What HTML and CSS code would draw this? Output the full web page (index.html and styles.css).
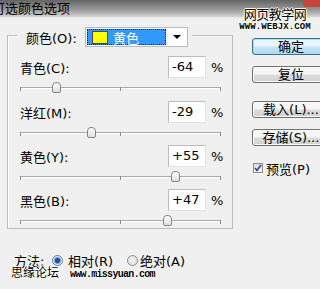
FILE: index.html
```html
<!DOCTYPE html>
<html>

<head>
    <title>可选颜色选项</title>
    <link rel="stylesheet" href="styles.css">
</head>

<body>
    <div class="titlebar">
        <span class="title">可选颜色选项</span>
        <span class="close"></span>
    </div>

    <div class="wm-top">
        <div class="wm-cn">网页教学网</div>
        <div class="wm-url">WWW.WEBJX.COM</div>
    </div>

    <div class="main">
        <div class="left">
            <div class="group">
                <div class="legend">
                    <span class="legend-label">颜色(O):</span>
                    <div class="select">
                        <div class="sel-value">
                            <span class="swatch"></span>
                            <span class="sel-text">黄色</span>
                        </div>
                        <div class="sel-arrow"><span class="tri"></span></div>
                    </div>
                </div>

                <div class="block first">
                    <div class="row">
                        <span class="lbl">青色(C):</span>
                        <span class="val">-64</span>
                        <span class="pct">%</span>
                    </div>
                    <div class="slider">
                        <span class="track"></span>
                        <span class="tick t0"></span><span class="tick t1"></span><span class="tick t2"></span>
                        <span class="thumb" style="left: 32px"></span>
                    </div>
                </div>

                <div class="block">
                    <div class="row">
                        <span class="lbl">洋红(M):</span>
                        <span class="val">-29</span>
                        <span class="pct">%</span>
                    </div>
                    <div class="slider">
                        <span class="track"></span>
                        <span class="tick t0"></span><span class="tick t1"></span><span class="tick t2"></span>
                        <span class="thumb" style="left: 67px"></span>
                    </div>
                </div>

                <div class="block">
                    <div class="row">
                        <span class="lbl">黄色(Y):</span>
                        <span class="val">+55</span>
                        <span class="pct">%</span>
                    </div>
                    <div class="slider">
                        <span class="track"></span>
                        <span class="tick t0"></span><span class="tick t1"></span><span class="tick t2"></span>
                        <span class="thumb" style="left: 151px"></span>
                    </div>
                </div>

                <div class="block">
                    <div class="row">
                        <span class="lbl">黑色(B):</span>
                        <span class="val">+47</span>
                        <span class="pct">%</span>
                    </div>
                    <div class="slider">
                        <span class="track"></span>
                        <span class="tick t0"></span><span class="tick t1"></span><span class="tick t2"></span>
                        <span class="thumb" style="left: 143px"></span>
                    </div>
                </div>
            </div>

            <div class="method">
                <span class="m-label">方法:</span>
                <span class="radio on"></span><span class="opt first-opt">相对(R)</span>
                <span class="radio"></span><span class="opt">绝对(A)</span>
            </div>
        </div>

        <div class="right">
            <div class="btn default">确定</div>
            <div class="btn b-reset">复位</div>
            <div class="btn b-load">载入(L)...</div>
            <div class="btn b-save">存储(S)...</div>
            <div class="check-row">
                <span class="check">
                    <svg width="8" height="8" viewBox="0 0 8 8">
                        <path d="M1 4 L3 6.5 L7 1" fill="none" stroke="#2b3f95" stroke-width="1.6" />
                    </svg>
                </span>
                <span class="check-text">预览(P)</span>
            </div>
        </div>
    </div>

    <div class="wm-bottom">
        <span class="wm-forum">思缘论坛</span>
        <span class="wm-site">www.missyuan.com</span>
    </div>
</body>

</html>
```

FILE: styles.css
```css
* {
    box-sizing: border-box;
}

body {
    margin: 0;
    width: 320px;
    height: 289px;
    overflow: hidden;
    position: relative;
    background-color: #f0f0f0;
    font-family: "DejaVu Sans", "Noto Sans CJK SC", sans-serif;
    font-size: 13px;
    color: #000;
}

/* title bar */
.titlebar {
    height: 18px;
    display: flex;
    align-items: center;
    background: linear-gradient(to bottom, #646464, #9c9c9c 60%, #d6d6d6);
    border-bottom: 1px solid #e6e6e6;
}

.title {
    margin-left: -8px;
    line-height: 15px;
    font-size: 13px;
}

.close {
    position: absolute;
    top: 0;
    right: 0;
    width: 17px;
    height: 7px;
    background: #c4453b;
    border-radius: 0 0 0 3px;
}

/* watermarks */
.wm-top {
    position: absolute;
    top: 6px;
    left: 238px;
    width: 74px;
    text-align: center;
    text-shadow: 1px 0 #fff, -1px 0 #fff, 0 1px #fff, 0 -1px #fff;
}

.wm-cn {
    font-size: 13px;
    letter-spacing: -0.5px;
    line-height: 17px;
}

.wm-url {
    font-family: "Liberation Mono", monospace;
    font-weight: bold;
    font-size: 9px;
    line-height: 9px;
    letter-spacing: 0.1px;
    margin-top: 0px;
}

.wm-bottom {
    position: absolute;
    left: 11px;
    top: 266px;
    display: flex;
    align-items: baseline;
    text-shadow: 1px 0 #fff, -1px 0 #fff, 0 1px #fff, 0 -1px #fff;
}

.wm-forum {
    font-size: 12px;
    line-height: 14px;
}

.wm-site {
    margin-left: 11px;
    font-family: "Liberation Mono", monospace;
    font-weight: bold;
    font-size: 10px;
    letter-spacing: -0.7px;
}

/* layout */
.main {
    display: flex;
}

.left {
    padding-left: 7px;
    width: 233px;
    flex: none;
}

.right {
    margin-left: 19px;
    padding-top: 20px;
    flex: none;
}

/* group box */
.group {
    margin-top: 17px;
    width: 226px;
    height: 194px;
    border: 1px solid #bdbdbd;
    box-shadow: inset 1px 1px #fdfdfd;
}

.legend {
    display: flex;
    align-items: center;
    width: fit-content;
    height: 20px;
    margin: -9px 0 0 9px;
    padding: 0 4px 0 9px;
    background-color: #f0f0f0;
}

.legend-label {
    width: 59px;
}

.select {
    display: flex;
    width: 103px;
    height: 20px;
    border: 1px solid #b9b9b9;
    background: #fff;
}

.sel-value {
    display: flex;
    align-items: center;
    width: 79px;
    margin: 1px;
    background: #3399ff;
    border: 1px dotted #1a1a1a;
}

.swatch {
    width: 16px;
    height: 13px;
    margin-left: 4px;
    background: #ffff00;
    border: 1px solid #4a4a4a;
}

.sel-text {
    margin-left: 5px;
    color: #fff;
}

.sel-arrow {
    flex: 1;
    display: flex;
    align-items: center;
    justify-content: center;
}

.tri {
    border-left: 4px solid transparent;
    border-right: 4px solid transparent;
    border-top: 4px solid #000;
}

/* value rows */
.block {
    height: 40px;
    margin-bottom: 4px;
}

.block.first {
    margin-top: 9px;
    margin-bottom: 5px;
}

.row {
    display: grid;
    grid-template-columns: 1fr 38px 26px;
    align-items: center;
    height: 22px;
    padding-left: 12px;
}

.val {
    height: 22px;
    line-height: 20px;
    padding-left: 3px;
    background: #fff;
    border: 1px solid;
    border-color: #bcbcbc #e2e2e2 #e2e2e2 #bcbcbc;
}

.pct {
    padding-left: 5px;
}

.slider {
    position: relative;
    height: 14px;
    width: 201px;
    margin: 4px 0 0 12px;
}

.track {
    position: absolute;
    top: 5px;
    left: 0;
    width: 201px;
    height: 2px;
    border-top: 1px solid #a9a9a9;
    border-bottom: 1px solid #fff;
}

.tick {
    position: absolute;
    top: 5px;
    width: 1px;
    height: 4px;
    background: #8c8c8c;
}

.t0 {
    left: 0;
}

.t1 {
    left: 100px;
}

.t2 {
    left: 200px;
}

.thumb {
    position: absolute;
    top: 0;
    width: 9px;
    height: 11px;
    border: 1px solid #858585;
    border-radius: 4px 4px 2px 2px;
    background: linear-gradient(to bottom, #ffffff, #dedede);
}

/* method row */
.method {
    display: flex;
    align-items: center;
    height: 16px;
    margin: 23px 0 0 7px;
}

.m-label {
    width: 38px;
}

.radio {
    width: 11px;
    height: 11px;
    border-radius: 50%;
    border: 1px solid #8e8e8e;
    background: radial-gradient(circle, #f4f4f4, #d9d9d9);
}

.radio.on {
    border-color: #5d7a99;
    background: radial-gradient(circle, #1f4f98 0 2px, #6d9bd6 3px, #e8eef4 4px);
}

.opt {
    margin-left: 2px;
}

.opt.first-opt {
    margin-left: 5px;
    width: 59px;
}

/* buttons */
.btn {
    width: 78px;
    height: 17px;
    line-height: 15px;
    text-align: center;
    border: 1px solid #707070;
    border-radius: 3px;
    background: linear-gradient(to bottom, #f6f6f6 45%, #dcdcdc 55%, #d0d0d0);
    box-shadow: inset 0 0 0 1px #fbfbfb;
}

.btn.default {
    border-color: #3c6f94;
    background: linear-gradient(to bottom, #e8f5fc 45%, #c4e4f4 55%, #b2d8ee);
    box-shadow: inset 0 0 0 1px #9ee2f8;
}

.b-reset {
    margin-top: 11px;
}

.b-load {
    margin-top: 18px;
}

.b-save {
    margin-top: 11px;
}

.check-row {
    display: flex;
    align-items: center;
    margin-top: 16px;
    height: 12px;
}

.check {
    display: flex;
    align-items: center;
    justify-content: center;
    width: 10px;
    height: 10px;
    margin-left: 1px;
    border: 1px solid #8b8b8b;
    background: linear-gradient(to bottom, #dcdcdc, #fbfbfb);
}

.check-text {
    margin-left: 3px;
}
```
